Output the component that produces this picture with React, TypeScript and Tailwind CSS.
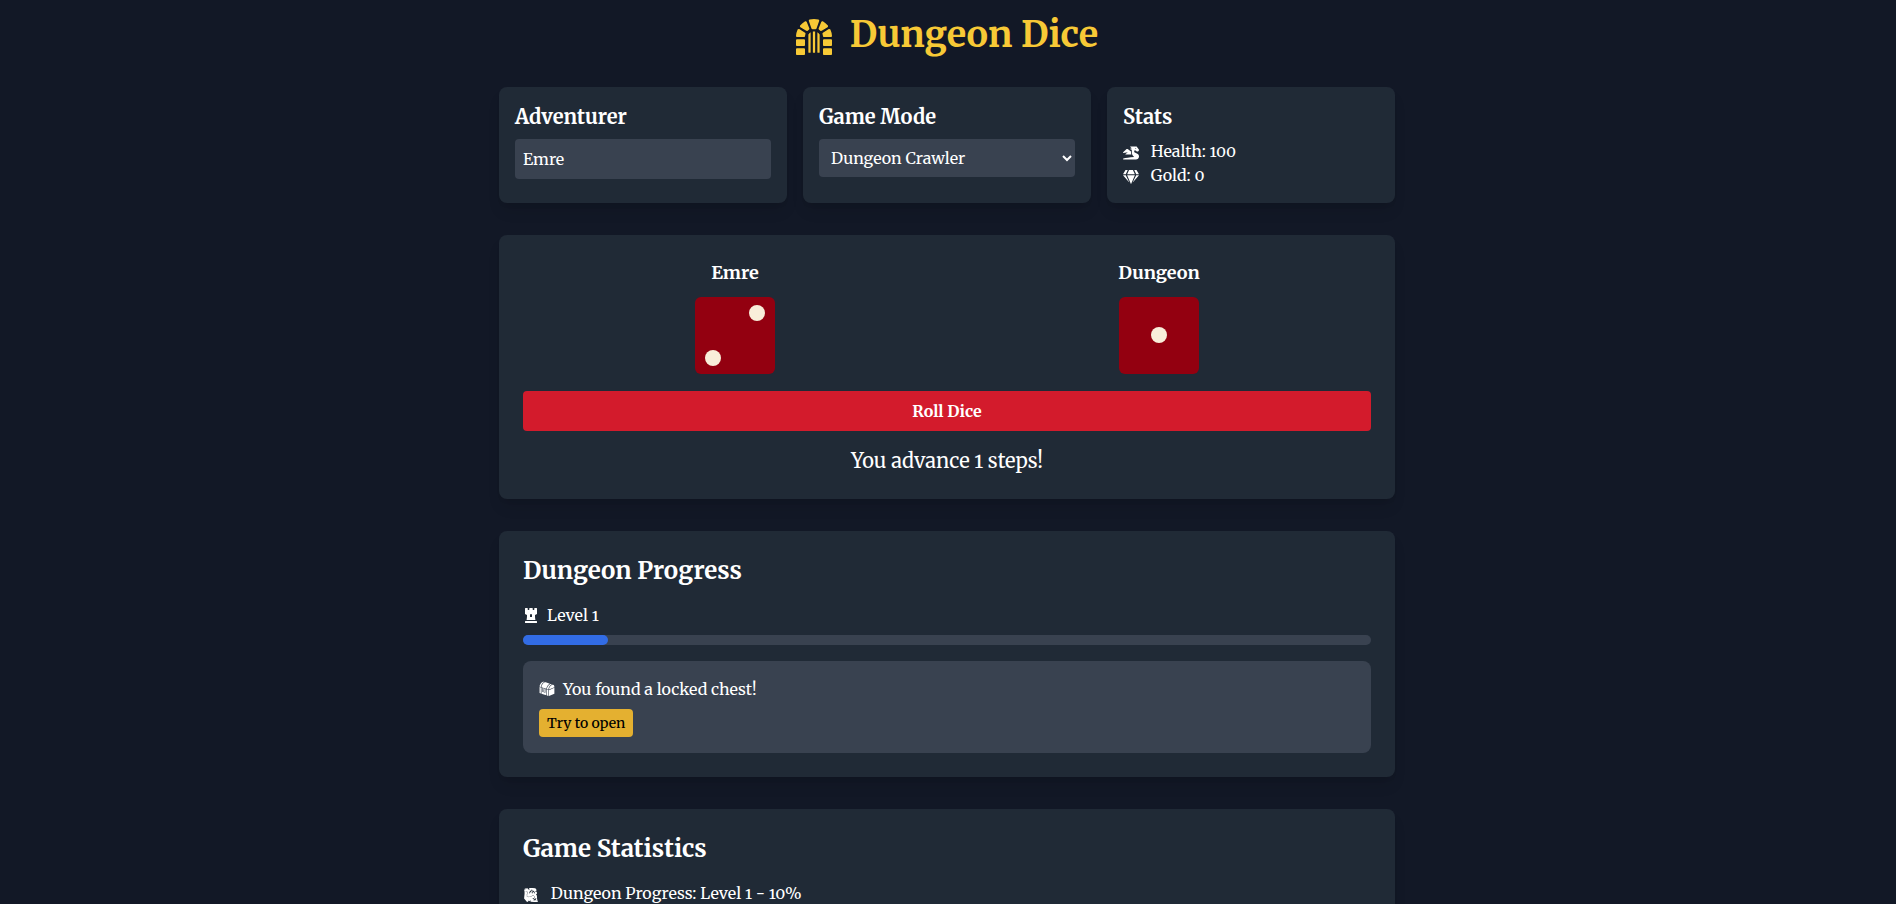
import { useState } from "react";
import type { ReactNode } from "react";
import { FaChessRook, FaDragon, FaDungeon, FaGem } from "react-icons/fa";
import { GiLockedChest, GiTreasureMap } from "react-icons/gi";

function Card({ children, className = "" }: { children: ReactNode; className?: string }) {
  return <section className={`rounded-lg bg-[#202a36] shadow-lg ${className}`}>{children}</section>;
}

const PIPS: Record<number, number[]> = {
  1: [4],
  2: [2, 6],
  3: [2, 4, 6],
  4: [0, 2, 6, 8],
  5: [0, 2, 4, 6, 8],
  6: [0, 2, 3, 5, 6, 8],
};

function Die({ label, value }: { label: string; value: number }) {
  return (
    <div className="flex flex-col items-center gap-2.5">
      <h3 className="text-lg font-bold">{label}</h3>
      <div
        role="img"
        aria-label={`${label} rolled ${value}`}
        className="grid h-[77px] w-20 grid-cols-3 grid-rows-3 place-items-center rounded-md bg-[#930010] px-[7px] py-[5px]"
      >
        {Array.from({ length: 9 }, (_, cell) => (
          <span
            key={cell}
            className={PIPS[value].includes(cell) ? "size-4 rounded-full bg-[#f9eeda]" : "size-4"}
          />
        ))}
      </div>
    </div>
  );
}

export default function App() {
  const [name, setName] = useState("Emre");
  const [mode, setMode] = useState("dungeon");

  return (
    <div className="min-h-screen bg-[#121826] pr-0.5 font-[Merriweather,'DejaVu_Serif_Condensed',serif] text-white [font-variant-numeric:oldstyle-nums]">
      <main className="mx-auto max-w-4xl pt-[15px] pb-8">
        <h1 className="mb-8 flex items-center justify-center gap-[18px] text-4xl font-bold text-[#f7c936]">
          <FaDungeon className="mt-1" />
          Dungeon Dice
        </h1>

        <div className="mb-8 grid grid-cols-3 gap-4">
          <Card className="p-4">
            <h2 className="mb-2 text-xl font-bold">
              <label htmlFor="adventurer">Adventurer</label>
            </h2>
            <input
              id="adventurer"
              type="text"
              value={name}
              onChange={(e) => setName(e.target.value)}
              className="block w-full rounded bg-[#394250] p-2"
            />
          </Card>
          <Card className="p-4">
            <h2 className="mb-2 text-xl font-bold">
              <label htmlFor="mode">Game Mode</label>
            </h2>
            <select
              id="mode"
              value={mode}
              onChange={(e) => setMode(e.target.value)}
              className="block w-full rounded bg-[#394250] p-2"
            >
              <option value="dungeon">Dungeon Crawler</option>
            </select>
          </Card>
          <Card className="p-4">
            <h2 className="mb-2 text-xl font-bold">Stats</h2>
            <p>
              <FaDragon className="mr-2 inline" /> Health: 100
            </p>
            <p>
              <FaGem className="mr-2 inline" /> Gold: 0
            </p>
          </Card>
        </div>

        <Card className="mb-8 p-6">
          <div className="mb-[17px] grid grid-cols-2">
            <Die label={name} value={2} />
            <Die label="Dungeon" value={1} />
          </div>
          <button type="button" className="block w-full rounded bg-[#d31b2c] px-4 py-2 font-bold">
            Roll Dice
          </button>
          <p className="mt-4 text-center text-xl">You advance 1 steps!</p>
        </Card>

        <Card className="mb-8 p-6">
          <h2 className="mb-4 text-2xl font-bold">Dungeon Progress</h2>
          <div className="mb-2 flex items-center gap-2">
            <FaChessRook />
            <span>Level 1</span>
          </div>
          <div
            role="progressbar"
            aria-label="Level progress"
            aria-valuenow={10}
            className="h-2.5 w-full rounded-full bg-[#394250]"
          >
            <div className="h-2.5 w-1/10 rounded-full bg-[#326ce5]" />
          </div>
          <div className="mt-4 rounded-lg bg-[#394250] p-4">
            <p className="mb-2 flex items-center gap-2">
              <GiLockedChest />
              You found a locked chest!
            </p>
            <button type="button" className="block rounded bg-[#e4b030] px-2 py-1 text-sm font-medium text-black">
              Try to open
            </button>
          </div>
        </Card>

        <Card className="p-6">
          <h2 className="mb-4 text-2xl font-bold">Game Statistics</h2>
          <p>
            <GiTreasureMap className="mr-2 inline" /> Dungeon Progress: Level 1 - 10%
          </p>
        </Card>
      </main>
    </div>
  );
}
